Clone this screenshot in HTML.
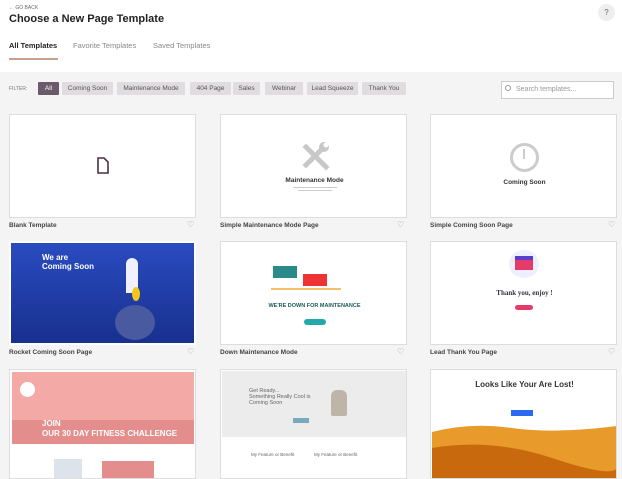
<!DOCTYPE html>
<html><head><meta charset="utf-8"><style>
*{margin:0;padding:0;box-sizing:border-box}
body{width:622px;height:473px;overflow:hidden;background:#f4f4f4;font-family:"Liberation Sans",sans-serif;position:relative;color:#333}
.hdr{position:absolute;left:0;top:0;width:622px;height:72px;background:#fff}
.a{position:absolute}
.chip{position:absolute;top:82px;height:13px;background:#e0dcdf;color:#555;font-size:6.5px;line-height:13px;text-align:center;border-radius:1px}
.card{position:absolute;width:187px;height:104px;background:#fff;border:1px solid #ddd;overflow:hidden}
.lbl{position:absolute;font-size:6.5px;font-weight:bold;color:#444}
.hrt{position:absolute;font-size:8px;color:#999}
</style></head><body>
<div class="hdr"></div>
<div class="a" style="left:9px;top:5px;font-size:5px;color:#666">← GO BACK</div>
<div class="a" style="left:9px;top:13px;font-size:11px;font-weight:bold;color:#222">Choose a New Page Template</div>
<div class="a" style="left:598px;top:4px;width:17px;height:17px;border-radius:50%;background:#eee;font-size:8px;text-align:center;line-height:17px;color:#666">?</div>
<div class="a" style="left:9px;top:41px;font-size:7.5px;font-weight:bold;color:#222">All Templates</div>
<div class="a" style="left:9px;top:58px;width:49px;height:2px;background:#c9a08e"></div>
<div class="a" style="left:73px;top:41px;font-size:7.5px;color:#888">Favorite Templates</div>
<div class="a" style="left:153px;top:41px;font-size:7.5px;color:#888">Saved Templates</div>
<div class="a" style="left:9px;top:86px;font-size:5px;color:#777">FILTER:</div>
<div class="chip" style="left:38px;width:21px;background:#6b5a6b;color:#fff">All</div>
<div class="chip" style="left:62px;width:51px">Coming Soon</div>
<div class="chip" style="left:117px;width:68px">Maintenance Mode</div>
<div class="chip" style="left:190px;width:41px">404 Page</div>
<div class="chip" style="left:233px;width:27px">Sales</div>
<div class="chip" style="left:265px;width:38px">Webinar</div>
<div class="chip" style="left:307px;width:51px">Lead Squeeze</div>
<div class="chip" style="left:362px;width:44px">Thank You</div>
<div class="a" style="left:501px;top:81px;width:113px;height:18px;background:#fff;border:1px solid #ccc;font-size:7px;color:#999;line-height:16px;padding-left:14px">Search templates...</div>
<div class="a" style="left:505px;top:85px;width:6px;height:6px;border:1px solid #999;border-radius:50%"></div>

<!-- row1 -->
<div class="card" style="left:9px;top:114px"><svg class="a" style="left:86px;top:42px" width="14" height="18"><path d="M2 1h6l4 4v11H2z" fill="none" stroke="#4a3040" stroke-width="1.6"/></svg></div>
<div class="card" style="left:220px;top:114px"><svg class="a" style="left:79px;top:26px" width="30" height="30" viewBox="0 0 30 30"><g stroke="#c8c8c8" stroke-width="5" stroke-linecap="square"><path d="M6 6L26 26"/><path d="M24 6L6 24"/></g><circle cx="24" cy="6" r="5" fill="#c8c8c8"/><circle cx="26" cy="4" r="2.5" fill="#fff"/></svg><div class="a" style="left:0;width:187px;top:62px;text-align:center;font-size:6.5px;font-weight:bold;color:#333">Maintenance Mode</div><div class="a" style="left:72px;top:72px;width:44px;height:1px;background:#ccc"></div><div class="a" style="left:77px;top:75px;width:34px;height:1px;background:#ccc"></div></div>
<div class="card" style="left:430px;top:114px"><div class="a" style="left:79px;top:28px;width:29px;height:29px;border:3px solid #ccc;border-radius:50%"></div><div class="a" style="left:92px;top:34px;width:2px;height:10px;background:#ccc"></div><div class="a" style="left:0;width:187px;top:64px;text-align:center;font-size:6.5px;font-weight:bold;color:#333">Coming Soon</div></div>
<div class="lbl" style="left:9px;top:222px">Blank Template</div><div class="hrt" style="left:187px;top:220px">♡</div>
<div class="lbl" style="left:220px;top:222px">Simple Maintenance Mode Page</div><div class="hrt" style="left:397px;top:220px">♡</div>
<div class="lbl" style="left:430px;top:222px">Simple Coming Soon Page</div><div class="hrt" style="left:608px;top:220px">♡</div>

<!-- row2 -->
<div class="card" style="left:9px;top:241px;border:2px solid #fff;background:linear-gradient(#2a4bc0,#18308e)"><div class="a" style="left:31px;top:10px;color:#fff;font-size:8px;font-weight:bold;line-height:9px">We are<br>Coming Soon</div><div class="a" style="left:104px;top:62px;width:40px;height:35px;background:#4a5aa0;border-radius:50%"></div><div class="a" style="left:115px;top:15px;width:12px;height:35px;background:#f0f0ff;border-radius:6px 6px 0 0"></div><div class="a" style="left:121px;top:44px;width:8px;height:14px;background:#f5c518;border-radius:50%"></div></div>
<div class="card" style="left:220px;top:241px"><div class="a" style="left:52px;top:24px;width:24px;height:12px;background:#2a8a8a"></div><div class="a" style="left:82px;top:32px;width:24px;height:12px;background:#e33"></div><div class="a" style="left:50px;top:46px;width:70px;height:2px;background:#f5c06a"></div><div class="a" style="left:0;width:187px;top:61px;text-align:center;font-size:5.5px;font-weight:bold;color:#1a5a5a">WE'RE DOWN FOR MAINTENANCE</div><div class="a" style="left:83px;top:77px;width:22px;height:6px;border-radius:3px;background:#2aa"></div></div>
<div class="card" style="left:430px;top:241px"><div class="a" style="left:78px;top:8px;width:30px;height:28px;border-radius:50%;background:#eeeefc"></div><div class="a" style="left:84px;top:14px;width:18px;height:14px;background:#e43b6b;border-top:4px solid #5a3dc8"></div><div class="a" style="left:0;width:187px;top:47px;text-align:center;font-size:7px;font-weight:bold;color:#334;font-family:'Liberation Serif',serif">Thank you, enjoy !</div><div class="a" style="left:84px;top:63px;width:18px;height:5px;border-radius:3px;background:#e43b6b"></div></div>
<div class="lbl" style="left:9px;top:349px">Rocket Coming Soon Page</div><div class="hrt" style="left:187px;top:347px">♡</div>
<div class="lbl" style="left:220px;top:349px">Down Maintenance Mode</div><div class="hrt" style="left:397px;top:347px">♡</div>
<div class="lbl" style="left:430px;top:349px">Lead Thank You Page</div><div class="hrt" style="left:608px;top:347px">♡</div>

<!-- row3 -->
<div class="card" style="left:9px;top:369px;height:110px"><div class="a" style="left:2px;top:2px;width:182px;height:72px;background:#f3a9a6"></div><div class="a" style="left:2px;top:50px;width:182px;height:24px;background:#e38e8d"></div><div class="a" style="left:10px;top:12px;width:15px;height:15px;border-radius:50%;background:#fff"></div><div class="a" style="left:32px;top:49px;color:#fff;font-size:8px;font-weight:bold;line-height:10px">JOIN<br>OUR 30 DAY FITNESS CHALLENGE</div><div class="a" style="left:44px;top:89px;width:28px;height:20px;background:#dde3ea"></div><div class="a" style="left:92px;top:91px;width:52px;height:18px;background:#e38e8d"></div></div>
<div class="card" style="left:220px;top:369px;height:110px"><div class="a" style="left:1px;top:1px;width:184px;height:66px;background:#ececec"></div><div class="a" style="left:28px;top:18px;font-size:5.5px;color:#666;line-height:6px">Get Ready...<br>Something Really Cool is<br>Coming Soon</div><div class="a" style="left:110px;top:20px;width:16px;height:26px;background:#bdb6a8;border-radius:6px 6px 2px 2px"></div><div class="a" style="left:72px;top:48px;width:16px;height:5px;background:#7ab"></div><div class="a" style="left:30px;top:82px;font-size:4.5px;color:#666">My Feature or Benefit</div><div class="a" style="left:93px;top:82px;font-size:4.5px;color:#666">My Feature or Benefit</div></div>
<div class="card" style="left:430px;top:369px;height:110px"><div class="a" style="left:0;width:187px;top:10px;text-align:center;font-size:8px;font-weight:bold;color:#333">Looks Like Your Are Lost!</div><div class="a" style="left:80px;top:40px;width:22px;height:6px;background:#2a6af0"></div><svg class="a" style="left:1px;top:48px" width="185" height="62" viewBox="0 0 185 62"><path d="M0 14Q40 4 80 10T185 8V62H0z" fill="#e89a2a"/><path d="M0 30Q60 20 120 40T185 50V62H0z" fill="#c8690e"/></svg></div>
</body></html>
